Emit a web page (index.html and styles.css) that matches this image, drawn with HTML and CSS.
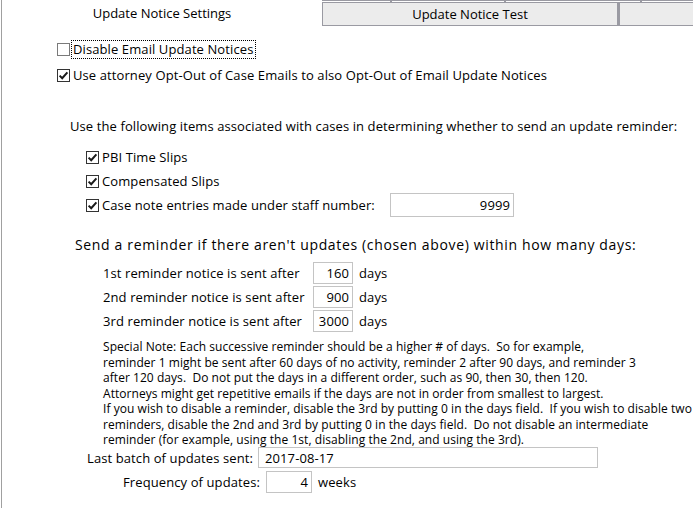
FILE: index.html
```html
<!DOCTYPE html>
<html lang="en">
<head>
    <meta charset="UTF-8">
    <meta name="viewport" content="width=device-width, initial-scale=1.0">
    <title>Update Notice Settings</title>
    <link rel="stylesheet" href="styles.css">
</head>
<body>

<div class="window">
    <div class="back-tabs">
        <span class="back-tab" style="width:70px"></span>
        <span class="back-tab" style="width:114px"></span>
        <span class="back-tab" style="width:136px"></span>
        <span class="back-tab rest"></span>
    </div>
    <div class="tabs">
        <div class="tab active">Update Notice Settings</div>
        <div class="tab">Update Notice Test</div>
        <div class="tab rest"></div>
    </div>

    <div class="panel">
        <div class="row cb-row">
            <span class="cbx"></span>
            <span class="focus">Disable Email Update Notices</span>
        </div>
        <div class="row cb-row">
            <span class="cbx checked"><svg viewBox="0 0 11 11"><path d="M1.6 5.6 L4.2 8.2 L9.4 2.4" /></svg></span>
            <span class="cb-text">Use attorney Opt-Out of Case Emails to also Opt-Out of Email Update Notices</span>
        </div>

        <div class="row intro">Use the following items associated with cases in determining whether to send an update reminder:</div>

        <div class="items">
            <div class="row item">
                <span class="cbx checked"><svg viewBox="0 0 11 11"><path d="M1.6 5.6 L4.2 8.2 L9.4 2.4" /></svg></span>
                <span class="cb-text">PBI Time Slips</span>
            </div>
            <div class="row item">
                <span class="cbx checked"><svg viewBox="0 0 11 11"><path d="M1.6 5.6 L4.2 8.2 L9.4 2.4" /></svg></span>
                <span class="cb-text">Compensated Slips</span>
            </div>
            <div class="row item">
                <span class="cbx checked"><svg viewBox="0 0 11 11"><path d="M1.6 5.6 L4.2 8.2 L9.4 2.4" /></svg></span>
                <span class="cb-text staff-label">Case note entries made under staff number:</span>
                <span class="field staff">9999</span>
            </div>
        </div>

        <div class="row send">Send a reminder if there aren't updates (chosen above) within how many days:</div>

        <div class="reminders">
            <div class="row reminder">
                <span class="rem-label">1st reminder notice is sent after</span>
                <span class="field days">160</span>
                <span class="unit">days</span>
            </div>
            <div class="row reminder">
                <span class="rem-label">2nd reminder notice is sent after</span>
                <span class="field days">900</span>
                <span class="unit">days</span>
            </div>
            <div class="row reminder">
                <span class="rem-label">3rd reminder notice is sent after</span>
                <span class="field days">3000</span>
                <span class="unit">days</span>
            </div>
        </div>

        <div class="note">
            Special Note: Each successive reminder should be a higher # of days.&nbsp; So for example,<br>
            reminder 1 might be sent after 60 days of no activity, reminder 2 after 90 days, and reminder 3<br>
            after 120 days.&nbsp; Do not put the days in a different order, such as 90, then 30, then 120.<br>
            Attorneys might get repetitive emails if the days are not in order from smallest to largest.<br>
            If you wish to disable a reminder, disable the 3rd by putting 0 in the days field.&nbsp; If you wish to disable two<br>
            reminders, disable the 2nd and 3rd by putting 0 in the days field.&nbsp; Do not disable an intermediate<br>
            reminder (for example, using the 1st, disabling the 2nd, and using the 3rd).
        </div>

        <div class="row batch">
            <span class="batch-label">Last batch of updates sent:</span>
            <span class="field date">2017-08-17</span>
        </div>
        <div class="row freq">
            <span class="freq-label">Frequency of updates:</span>
            <span class="field weeks">4</span>
            <span class="unit">weeks</span>
        </div>
    </div>
</div>

</body>
</html>
```

FILE: styles.css
```css
body {
    margin: 0;
    background-color: #ffffff;
    font-family: "Open Sans", "Noto Sans", sans-serif;
    font-size: 13px;
    letter-spacing: 0.1px;
    color: #000000;
}

.window {
    width: 693px;
    height: 508px;
    overflow: hidden;
}

/* second row of tabs, mostly hidden behind the first */
.back-tabs {
    display: flex;
    height: 2px;
    margin-left: 322px;
}

.back-tab {
    height: 2px;
    border-top: 1px solid #9a9aa2;
    border-right: 2px solid #9a9aa2;
    box-sizing: border-box;
}

.back-tab.rest {
    flex: 1;
    border-right: none;
}

.tabs {
    display: flex;
    height: 24px;
}

.tab {
    width: 297px;
    background-color: #ececec;
    border: 1px solid #9a9aa2;
    border-right-width: 2px;
    box-sizing: border-box;
    text-align: center;
    line-height: 22px;
    letter-spacing: 0;
}

.tab.active {
    width: 321px;
    height: 26px;
    margin-top: -2px;
    margin-left: 1px;
    background-color: #ffffff;
    border: none;
    border-left: 1px solid #a0a0a0;
    line-height: 26px;
}

.tab.rest {
    flex: 1;
    border-right: none;
}

.panel {
    margin-left: 1px;
    padding-top: 10px;
    border-left: 1px solid #a0a0a0;
    height: 472px;
}

.row {
    display: flex;
    align-items: center;
}

.cb-row {
    height: 26px;
    margin-left: 55px;
}

.cbx {
    width: 13px;
    height: 13px;
    box-sizing: border-box;
    border: 1px solid #7a7a7a;
    background-color: #ffffff;
    display: inline-flex;
    align-items: center;
    justify-content: center;
    flex-shrink: 0;
}

.cbx.checked {
    border-color: #333333;
}

.cbx svg {
    width: 11px;
    height: 11px;
}

.cbx path {
    fill: none;
    stroke: #1a1a1a;
    stroke-width: 2;
}

.focus {
    margin-left: 2px;
    padding: 0 2px 0 1px;
    line-height: 17px;
    outline: 1px dotted #000000;
}

.cb-text {
    margin-left: 3px;
}

.intro {
    height: 24px;
    margin-top: 26px;
    margin-left: 68px;
}

.items {
    margin-top: 7px;
    margin-left: 84px;
}

.item {
    height: 24px;
}

.staff-label {
    width: 288px;
}

.field {
    box-sizing: border-box;
    border: 1px solid #c4c4c4;
    background-color: #ffffff;
    height: 22px;
    line-height: 20px;
    padding: 0 3px;
    text-align: right;
}

.staff {
    width: 124px;
    height: 24px;
    line-height: 22px;
}

.send {
    height: 24px;
    margin-top: 15px;
    margin-left: 73px;
    font-size: 14px;
    letter-spacing: 0.65px;
}

.reminders {
    margin-top: 5px;
    margin-left: 101px;
}

.reminder {
    height: 24px;
}

.rem-label {
    width: 210px;
}

.days {
    width: 40px;
}

.unit {
    margin-left: 6px;
}

.note {
    margin-top: 6px;
    margin-left: 101px;
    font-size: 12px;
    line-height: 15.5px;
    letter-spacing: 0.05px;
    white-space: nowrap;
}

.batch {
    height: 20px;
}

.batch-label {
    width: 251px;
    text-align: right;
}

.date {
    width: 340px;
    height: 21px;
    margin-left: 5px;
    text-align: left;
    padding-left: 6px;
}

.freq {
    height: 20px;
    margin-top: 4px;
}

.freq-label {
    width: 258px;
    text-align: right;
}

.weeks {
    width: 46px;
    margin-left: 6px;
}
```
